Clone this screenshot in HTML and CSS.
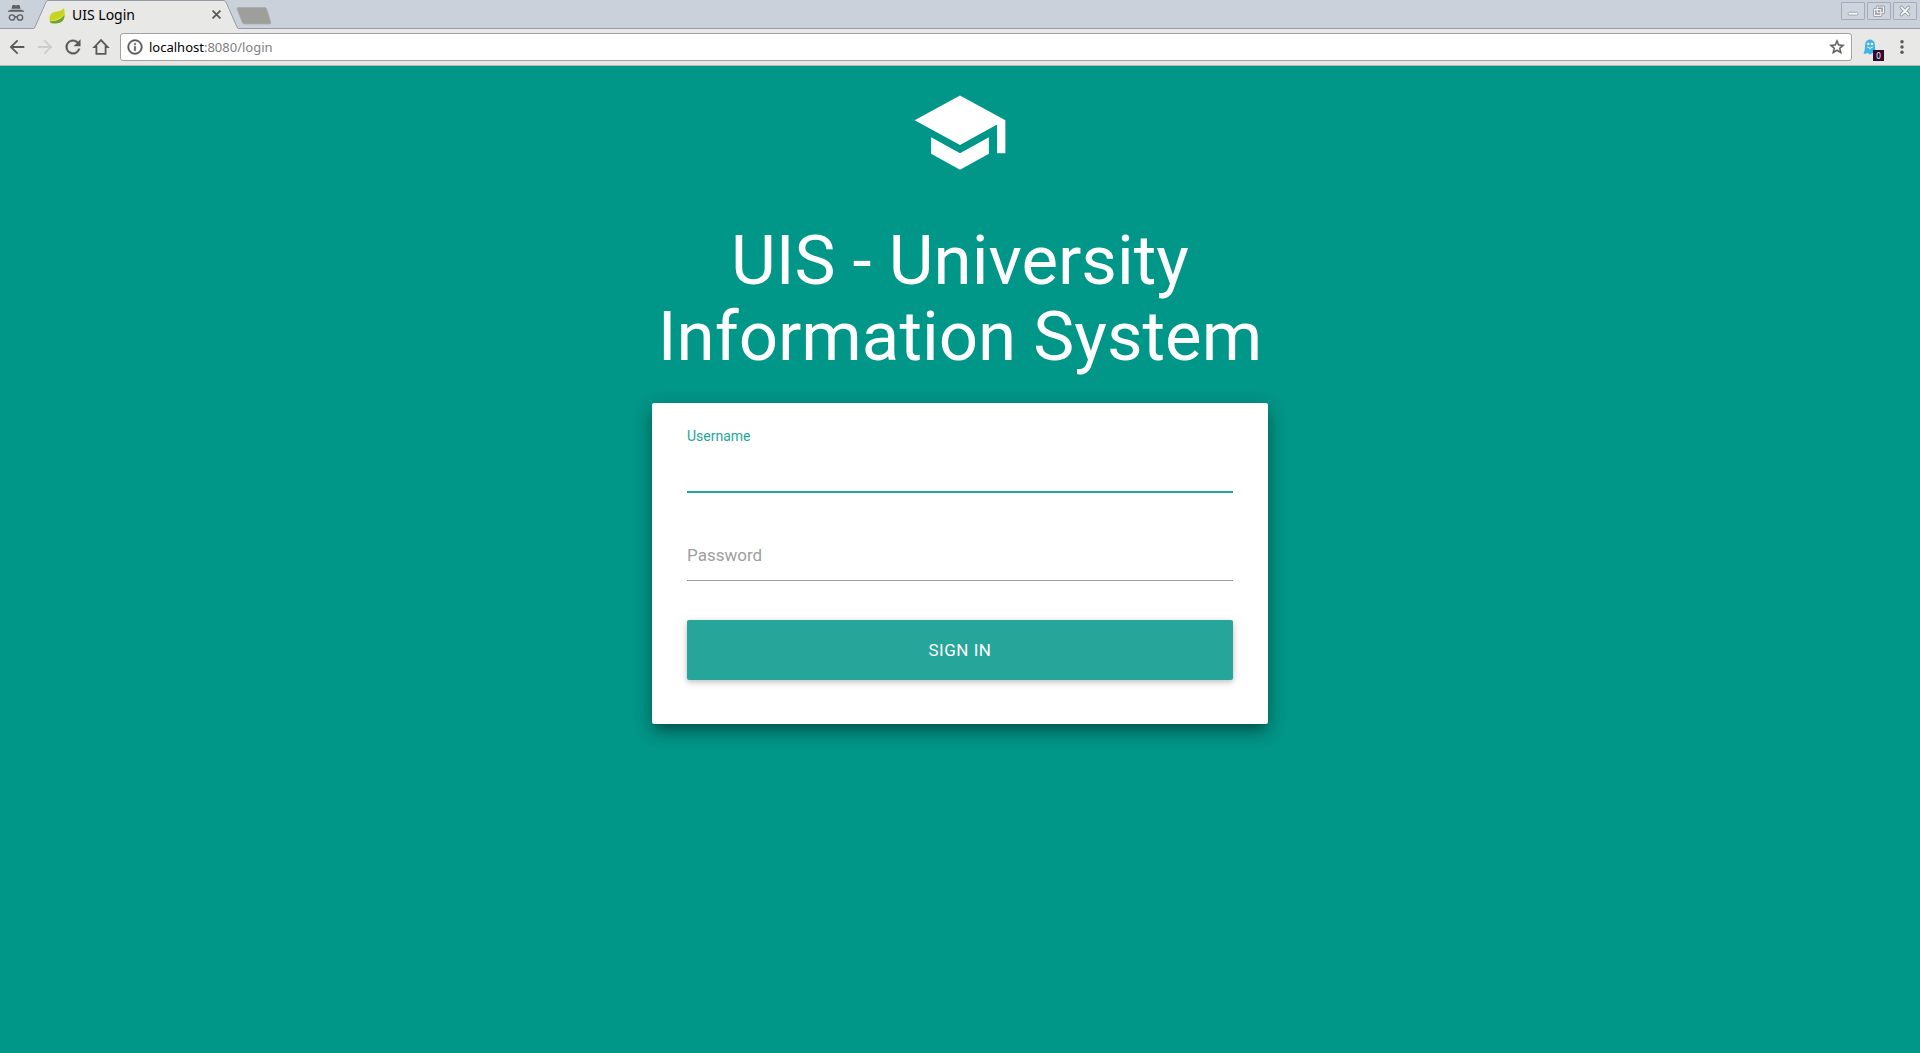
FILE: index.html
```html
<!DOCTYPE html>
<html lang="en">
<head>
<meta charset="utf-8">
<title>UIS Login</title>
<link rel="stylesheet" href="styles.css">
</head>
<body>
<header class="browser">
  <div class="tabstrip">
    <svg class="incognito" viewBox="0 0 16 16" aria-hidden="true"><path d="M4.5 0h2l1.500.6L9.500 0h2l1 3.800h-9zM0 5.800l3-1.100h10l3 1.100v.9H0z"/><g fill="none" stroke="#5c5d5f" stroke-width="1.300"><circle cx="4" cy="12.500" r="2.700"/><circle cx="12" cy="12.500" r="2.700"/><path d="M6.700 12.200q1.300-.9 2.600 0"/></g></svg>
    <div class="tab">
      <svg class="tab-shape" viewBox="0 0 206 29" preserveAspectRatio="none" aria-hidden="true"><path d="M0 28.500Q1.500 28.500 2 27L13 2Q14 .5 15 .5H190Q192 .5 193 2L204 27Q204.500 28.500 206 28.500V29H0z" fill="#e8e8e6"/><path d="M0 28.500Q1.500 28.500 2 27L13 2Q14 .5 15 .5H190Q192 .5 193 2L204 27Q204.500 28.500 206 28.500" fill="none" stroke="#959ba6"/></svg>
      <svg class="favicon" viewBox="0 0 16 16" aria-hidden="true"><path d="M15 0c1 5 1.500 10-1.500 13C10 16 5 15.500 1.500 15 0 12 0 8 2.500 5.500 6 2.500 12 4.500 15 0z" fill="#c6d420"/><path d="M1.500 13C7 13.500 12 11.500 15.300 7c.2 2.500-.4 4.500-1.800 6C10 16 5 15.500 1.500 15z" fill="#6ba53a"/><path d="M2 12.500c5 .2 9.500-1.500 12.500-6" fill="none" stroke="#dde65c"/></svg>
      <span class="tab-title">UIS Login</span>
      <button class="tab-close" aria-label="Close tab"><svg viewBox="0 0 8 8"><path d="M.5.5l7 7m0-7l-7 7" fill="none" stroke="#5a5a5a" stroke-width="1.600"/></svg></button>
    </div>
    <button class="new-tab" aria-label="New tab"><svg viewBox="0 0 35 18"><path d="M2 .5h27q1 0 1.500 1L35 16q0 1-1 1H8q-1 0-1.500-1L1 2Q1 .5 2 .5z" fill="#9e9e9b" stroke="#a8abb0" stroke-width=".8"/></svg></button>
    <div class="window-buttons">
      <button aria-label="Minimize"><svg viewBox="0 0 24 18"><rect x="6.500" y="10.500" width="11" height="3" rx="1.500" fill="#fff" stroke="#9499a1"/></svg></button>
      <button aria-label="Restore"><svg viewBox="0 0 24 18"><path d="M10 4.500h7v6.500h-7zM7 7.500h7V14H7z" fill="none" stroke="#9499a1" stroke-width="3.200" stroke-linejoin="round"/><path d="M10 4.500h7v6.500h-7zM7 7.500h7V14H7z" fill="none" stroke="#f2f3f5" stroke-width="1.300"/></svg></button>
      <button aria-label="Close"><svg viewBox="0 0 24 18"><path d="M8 5l8 8m0-8l-8 8" fill="none" stroke="#9499a1" stroke-width="4" stroke-linecap="round"/><path d="M8 5l8 8m0-8l-8 8" fill="none" stroke="#f6f7f8" stroke-width="2" stroke-linecap="round"/></svg></button>
    </div>
  </div>
  <div class="toolbar">
    <button class="tool" aria-label="Back"><svg viewBox="0 0 24 24"><path d="M20 10.800H7.830l5.590-5.390L12 4l-8 8 8 8 1.410-1.410L7.830 13.200H20z"/></svg></button>
    <button class="tool tool-off" aria-label="Forward" disabled><svg viewBox="0 0 24 24"><path d="M12 4l-1.410 1.410L16.170 10.800H4v2.400h12.170l-5.580 5.390L12 20l8-8z"/></svg></button>
    <button class="tool" aria-label="Reload"><svg viewBox="0 0 24 24"><path d="M17.650 6.350A7.960 7.960 0 0 0 12 4a8 8 0 1 0 7.730 10h-2.080A6 6 0 1 1 12 6c1.660 0 3.140.690 4.220 1.780L13 11h7V4z" stroke="#5a5a5a" stroke-width=".4"/></svg></button>
    <button class="tool" aria-label="Home"><svg viewBox="0 0 24 24"><path d="M12 4.500L4.800 12H7v7.500h10V12h2.200z" fill="none" stroke="#5a5a5a" stroke-width="2"/></svg></button>
    <div class="omnibox">
      <svg class="info" viewBox="0 0 24 24" aria-hidden="true"><path d="M11 17h2v-6h-2zm1-15a10 10 0 1 0 0 20 10 10 0 0 0 0-20zm0 18a8 8 0 1 1 0-16 8 8 0 0 1 0 16zM11 9h2V7h-2z" stroke="#5a5a5a" stroke-width=".5"/></svg>
      <span class="url"><b>localhost</b>:8080/login</span>
      <svg class="star" viewBox="0 0 24 24" aria-hidden="true"><path d="M22 9.240l-7.190-.62L12 2 9.190 8.630 2 9.240l5.460 4.730L5.820 21 12 17.270 18.180 21l-1.630-7.030zM12 15.400l-3.760 2.270 1-4.280-3.320-2.880 4.380-.38L12 6.100l1.710 4.040 4.380.380-3.320 2.880 1 4.280z" stroke="#5a5a5a" stroke-width=".5"/></svg>
    </div>
    <button class="tool extension" aria-label="Ghostery"><svg viewBox="0 0 16 16"><path d="M3 6.500C3 3 5 .5 8 .5s5 2.500 5 6c0 3 .3 5 1 8.500-2 .7-2.500-1-3.500-1s-1.300 1.500-2.500 1.500S6.500 14 5.500 14s-1.500 1.300-4 .6C2.500 12 3 10 3 6.500z" fill="#41b6e6"/><circle cx="6.300" cy="5" r="1.200" fill="#fff"/><circle cx="9.900" cy="5" r="1.200" fill="#fff"/><path d="M5.300 8q2.700 2.800 5.400 0" fill="none" stroke="#fff"/></svg><span class="badge">0</span></button>
    <button class="tool" aria-label="Menu"><svg viewBox="0 0 24 24"><circle cx="12" cy="6.200" r="1.900"/><circle cx="12" cy="12" r="1.900"/><circle cx="12" cy="17.800" r="1.900"/></svg></button>
  </div>
</header>
<main class="login">
  <svg class="logo" viewBox="0 0 24 24" aria-hidden="true"><path d="M5 13.180v4L12 21l7-3.820v-4L12 17zM12 3L1 9l11 6 9-4.910V17h2V9z"/></svg>
  <h1>UIS - University Information System</h1>
  <form class="card">
    <div class="field field-active">
      <label for="username">Username</label>
      <input id="username" type="text">
    </div>
    <div class="field">
      <label for="password">Password</label>
      <input id="password" type="password">
    </div>
    <button class="submit" type="submit">SIGN IN</button>
  </form>
</main>
</body>
</html>
```

FILE: styles.css
```css
* { box-sizing: border-box; }
body {
  margin: 0;
  min-height: 100vh;
  background: #009688;
  font-family: Roboto, sans-serif;
}
button {
  margin: 0;
  padding: 0;
  border: 0;
  background: none;
  font-family: inherit;
}
svg { display: block; }

/* Browser frame */
.browser { font-family: "Noto Sans", sans-serif; }
.tabstrip {
  display: flex;
  height: 29px;
  background: #cad1db;
  box-shadow: inset 0 -1px #959ba6;
}
.incognito {
  width: 16px;
  height: 16px;
  margin: 5px 9px 0 8px;
  fill: #5c5d5f;
}
.tab {
  position: relative;
  display: flex;
  align-items: center;
  width: 206px;
  padding: 0 18px 0 16px;
}
.tab-shape {
  position: absolute;
  inset: 0;
  width: 100%;
  height: 100%;
}
.favicon {
  position: relative;
  width: 16px;
  height: 16px;
  margin-top: 2px;
}
.tab-title {
  position: relative;
  flex: 1;
  margin-left: 7px;
  font-size: 14px;
  line-height: 20px;
  color: #000;
}
.tab-close { position: relative; }
.tab-close svg {
  width: 9px;
  height: 9px;
}
.new-tab {
  align-self: flex-start;
  margin-top: 7px;
  margin-left: -3px;
}
.new-tab svg {
  width: 35px;
  height: 18px;
}
.window-buttons {
  display: flex;
  gap: 2px;
  margin: 2px 3px 0 auto;
}
.window-buttons button {
  width: 24px;
  height: 18px;
  border: 1px solid #a5acb7;
  border-radius: 1px;
  background: #ced4dd;
}
.window-buttons svg {
  width: 22px;
  height: 16px;
}
.toolbar {
  display: flex;
  align-items: center;
  height: 37px;
  padding: 0 4px 0 3px;
  border-bottom: 1px solid #b5b5b3;
  background: #e8e8e6;
}
.tool {
  position: relative;
  display: grid;
  place-items: center;
  width: 28px;
  height: 28px;
}
.tool svg {
  width: 22px;
  height: 22px;
  fill: #5a5a5a;
}
.tool-off svg { fill: #cdcdcb; }
.omnibox {
  display: flex;
  flex: 1;
  align-items: center;
  height: 28px;
  margin: 0 4px 0 5px;
  padding: 0 5px;
  border: 1px solid #a2a2a2;
  border-radius: 3px;
  background: #fff;
}
.info {
  width: 18px;
  height: 18px;
  fill: #5a5a5a;
}
.url {
  flex: 1;
  margin-left: 5px;
  font-size: 13px;
  line-height: 20px;
  color: #808080;
}
.url b {
  font-weight: 400;
  color: #000;
}
.star {
  width: 18px;
  height: 18px;
  fill: #5a5a5a;
}
.extension { margin-right: 4px; }
.tool.extension svg {
  width: 16px;
  height: 16px;
}
.badge {
  position: absolute;
  right: 0;
  bottom: 0;
  width: 11px;
  height: 11px;
  background: #310a31;
  color: #fff;
  font-size: 8px;
  line-height: 11px;
  text-align: center;
}

/* Login page */
.login {
  max-width: 616px;
  margin: 0 auto;
  padding: 17px 0;
}
.logo {
  width: 100px;
  height: 99px;
  margin: 0 auto;
  fill: #fff;
}
h1 {
  margin: 41px 0 28px;
  color: #fff;
  font-size: 69px;
  font-weight: 400;
  line-height: 76px;
  text-align: center;
}
.card {
  display: flex;
  flex-direction: column;
  padding: 25px 35px 44px;
  border-radius: 2px;
  background: #fff;
  box-shadow: 0 8px 17px rgba(0, 0, 0, .2), 0 6px 20px rgba(0, 0, 0, .19), 0 8px 10px -5px rgba(0, 0, 0, .2);
}
.field {
  display: grid;
  grid-template-rows: 13px 51px;
  margin-bottom: 25px;
}
.field label {
  grid-area: 2 / 1;
  align-self: center;
  padding-bottom: 2px;
  color: #9e9e9e;
  font-size: 17px;
  line-height: 20px;
}
.field input {
  grid-area: 2 / 1;
  width: 100%;
  padding: 0;
  border: 0;
  border-bottom: 1px solid #9e9e9e;
  border-radius: 0;
  outline: 0;
  background: transparent;
  font-family: inherit;
  font-size: 17px;
}
.field-active label {
  grid-area: 1 / 1;
  align-self: start;
  color: #26a69a;
  font-size: 14px;
  line-height: 16px;
}
.field-active input {
  border-bottom-color: #26a69a;
  box-shadow: 0 1px #26a69a;
}
.submit {
  height: 60px;
  margin-top: 14px;
  border-radius: 2px;
  background: #26a69a;
  color: #fff;
  font-size: 17px;
  letter-spacing: .03em;
  box-shadow: 0 2px 5px rgba(0, 0, 0, .16), 0 2px 10px rgba(0, 0, 0, .12);
}
```
